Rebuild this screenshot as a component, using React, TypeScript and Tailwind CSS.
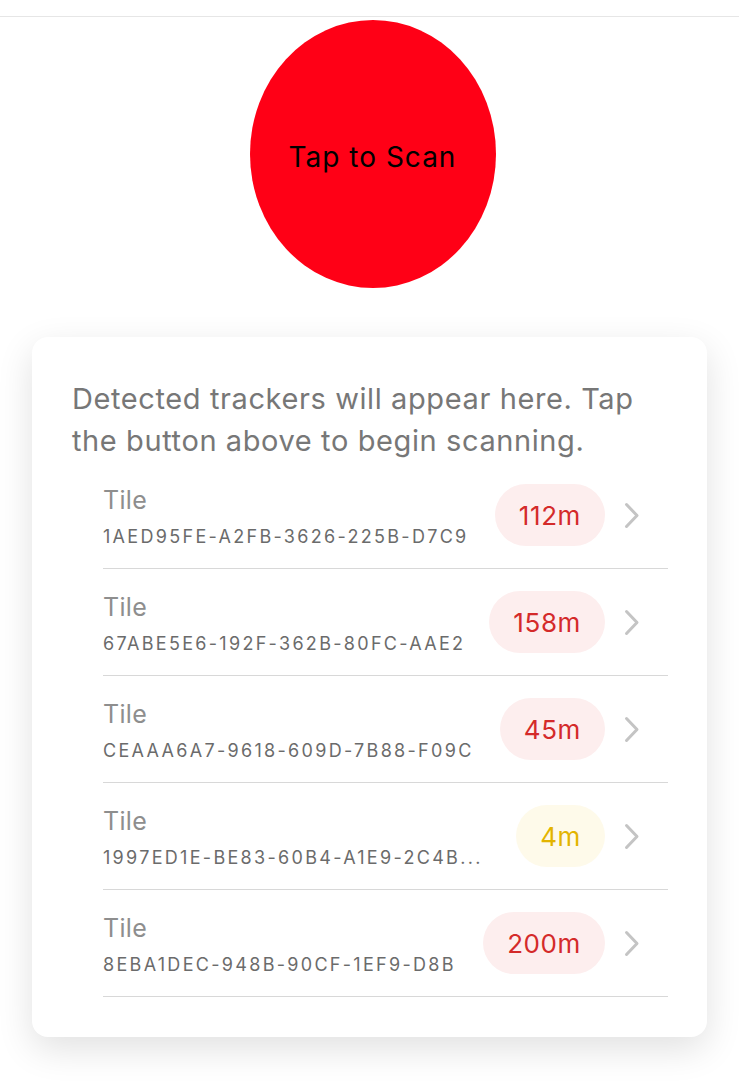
import React from 'react';

type Tracker = {
  name: string;
  id: string;
  distance: string;
  near?: boolean;
};

const trackers: Tracker[] = [
  { name: 'Tile', id: '1AED95FE-A2FB-3626-225B-D7C9', distance: '112m' },
  { name: 'Tile', id: '67ABE5E6-192F-362B-80FC-AAE2', distance: '158m' },
  { name: 'Tile', id: 'CEAAA6A7-9618-609D-7B88-F09C', distance: '45m' },
  { name: 'Tile', id: '1997ED1E-BE83-60B4-A1E9-2C4B...', distance: '4m', near: true },
  { name: 'Tile', id: '8EBA1DEC-948B-90CF-1EF9-D8B', distance: '200m' },
];

function Chevron() {
  return (
    <svg width="16" height="27" viewBox="0 0 16 27" fill="none" className="shrink-0">
      <path d="M2.5 2.5 L13 13.5 L2.5 24.5" stroke="#c4c4c4" strokeWidth="3" strokeLinecap="round" strokeLinejoin="round" />
    </svg>
  );
}

function TrackerRow({ tracker }: { tracker: Tracker }) {
  return (
    <div className="flex items-center h-[107px] border-b border-[#d8d8d8] pr-[28px]">
      <div className="flex-1 min-w-0 overflow-hidden pt-[4px]">
        <div className="text-[25px] leading-[30px] tracking-[0.3px] text-[#8e8e8e]">{tracker.name}</div>
        <div className="mt-[9px] text-[18px] leading-[26px] tracking-[2.3px] text-[#6b6b6b] whitespace-nowrap">
          {tracker.id}
        </div>
      </div>
      <div
        className={`ml-[24px] h-[62px] px-[24px] rounded-full flex items-center text-[26px] tracking-[0.6px] ${
          tracker.near ? 'bg-[#fefaea] text-[#e3b400]' : 'bg-[#fdeeee] text-[#d42a2a]'
        }`}
      >
        {tracker.distance}
      </div>
      <div className="ml-[19px]">
        <Chevron />
      </div>
    </div>
  );
}

export default function App() {
  return (
    <div className="min-h-[1092px] bg-white font-['Inter',sans-serif]">
      <div className="h-[17px] border-b border-[#e6e6e6]" />
      <div className="flex justify-center pt-[3px] pl-[6px]">
        <button className="w-[246px] h-[268px] rounded-[50%] bg-[#ff0016] text-black text-[28px] tracking-[1px] pt-[6px] flex items-center justify-center">
          Tap to Scan
        </button>
      </div>
      <div className="mx-[32px] mt-[49px] bg-white rounded-[16px] shadow-[0_12px_36px_rgba(0,0,0,0.12)] pt-[41px] pb-[40px]">
        <p className="px-[40px] text-[29px] leading-[42px] tracking-[0.6px] text-[#777777]">
          Detected trackers will appear here. Tap the button above to begin scanning.
        </p>
        <div className="pl-[71px] pr-[39px]">
          {trackers.map((t, i) => (
            <TrackerRow key={i} tracker={t} />
          ))}
        </div>
      </div>
    </div>
  );
}
